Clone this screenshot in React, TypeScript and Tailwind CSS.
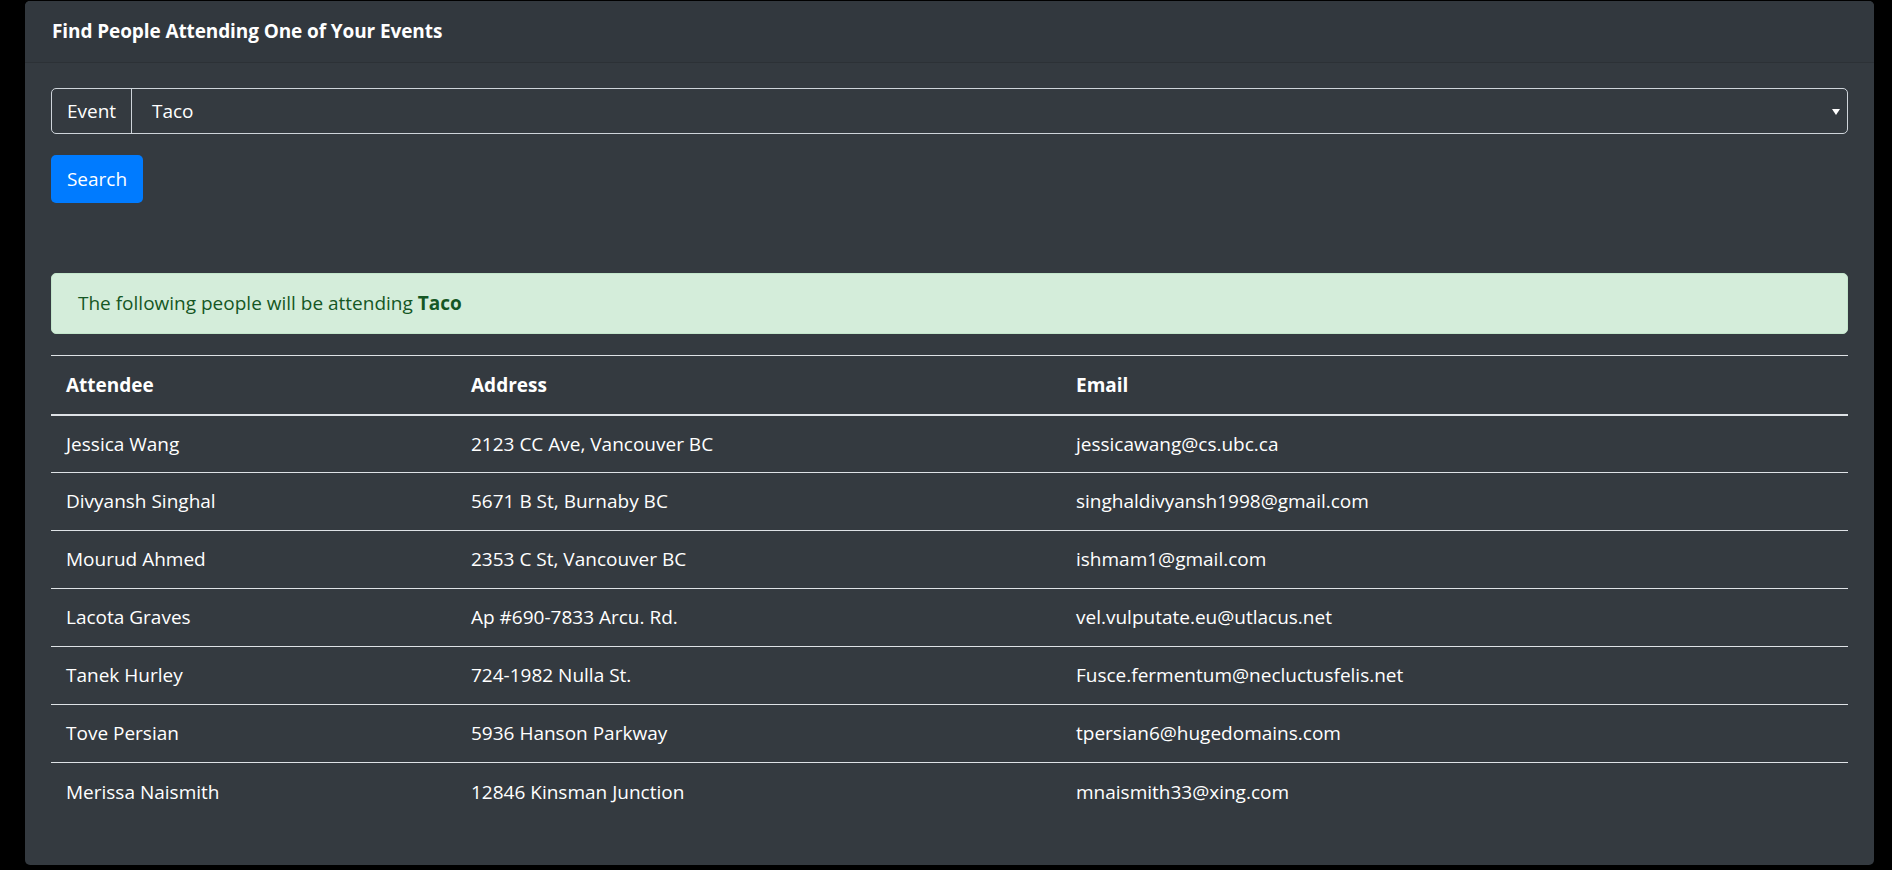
import React from "react";

const rows = [
  ["Jessica Wang", "2123 CC Ave, Vancouver BC", "jessicawang@cs.ubc.ca"],
  ["Divyansh Singhal", "5671 B St, Burnaby BC", "singhaldivyansh1998@gmail.com"],
  ["Mourud Ahmed", "2353 C St, Vancouver BC", "ishmam1@gmail.com"],
  ["Lacota Graves", "Ap #690-7833 Arcu. Rd.", "vel.vulputate.eu@utlacus.net"],
  ["Tanek Hurley", "724-1982 Nulla St.", "Fusce.fermentum@necluctusfelis.net"],
  ["Tove Persian", "5936 Hanson Parkway", "tpersian6@hugedomains.com"],
  ["Merissa Naismith", "12846 Kinsman Junction", "mnaismith33@xing.com"],
];

export default function App() {
  return (
    <div
      className="w-[1892px] h-[870px] bg-black overflow-hidden text-white pt-[1px]"
      style={{ fontFamily: '"Open Sans", "Noto Sans", sans-serif' }}
    >
      <div className="ml-[25px] w-[1849px] h-[864px] bg-[#343a40] rounded-[5px] overflow-hidden flex flex-col">
        <div className="h-[62px] shrink-0 bg-[#32383e] border-b border-[#2c3136] flex items-center pl-[27px]">
          <span className="text-[19px] font-bold tracking-[-0.1px]">Find People Attending One of Your Events</span>
        </div>
        <div className="px-[26px] pt-[25px] flex flex-col">
          <div className="flex h-[46px] border border-[#ced4da] rounded-[5px]">
            <div className="w-[80px] shrink-0 border-r border-[#ced4da] flex items-center justify-center text-[19px]">
              Event
            </div>
            <div className="flex-1 flex items-center pl-[20px] pr-[10px] text-[19px] relative">
              <span>Taco</span>
              <svg className="absolute right-[7px] top-[20px]" width="8" height="6" viewBox="0 0 8 6">
                <path d="M0 0 L8 0 L4 6 Z" fill="#ffffff" />
              </svg>
            </div>
          </div>
          <div className="mt-[21px]">
            <button className="w-[92px] h-[48px] bg-[#007bff] rounded-[5px] text-[19px] text-white flex items-center justify-center">
              Search
            </button>
          </div>
          <div className="mt-[70px] h-[61px] bg-[#d4edda] border border-[#c3e6cb] rounded-[5px] flex items-center pl-[26px] text-[#155724] text-[19px]">
            <span>
              The following people will be attending <b className="font-bold">Taco</b>
            </span>
          </div>
          <table className="mt-[21px] w-full border-collapse text-[19px]">
            <thead>
              <tr className="h-[59px] border-t border-[#dee2e6] border-b-2 border-b-[#dee2e6]">
                <th className="w-[405px] text-left font-bold pl-[15px]">Attendee</th>
                <th className="w-[605px] text-left font-bold pl-[15px]">Address</th>
                <th className="text-left font-bold pl-[15px]">Email</th>
              </tr>
            </thead>
            <tbody>
              {rows.map((r, i) => (
                <tr key={i} className={"h-[58px] " + (i > 0 ? "border-t border-[#dee2e6]" : "")}>
                  <td className="pl-[15px]">{r[0]}</td>
                  <td className="pl-[15px]">{r[1]}</td>
                  <td className="pl-[15px]">{r[2]}</td>
                </tr>
              ))}
            </tbody>
          </table>
        </div>
      </div>
    </div>
  );
}
